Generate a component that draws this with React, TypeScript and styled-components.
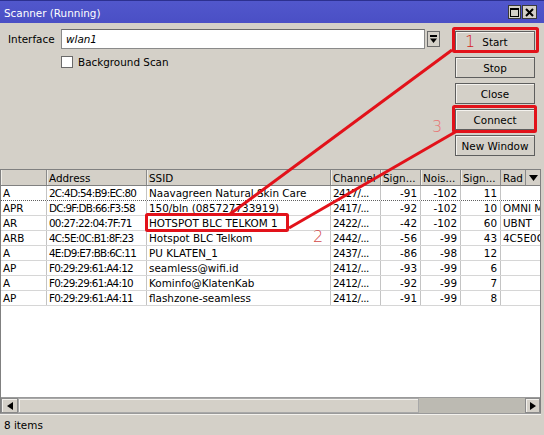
import React from 'react';
import styled, { createGlobalStyle } from 'styled-components';

const Global = createGlobalStyle`
  html, body { margin: 0; padding: 0; background: #d4d0c8; }
  body { font-family: "DejaVu Sans", "Liberation Sans", sans-serif; font-size: 10.4px; color: #000; }
  * { box-sizing: border-box; }
`;

const FONT = `"DejaVu Sans", "Liberation Sans", sans-serif`;

const Window = styled.div`
  position: relative;
  width: 544px;
  height: 435px;
  display: flex;
  flex-direction: column;
  background: #d4d0c8;
  overflow: hidden;
  font-family: ${FONT};
  font-size: 10.4px;
`;

const TitleBar = styled.div`
  height: 23px;
  flex: none;
  display: flex;
  align-items: center;
  padding: 0 7px 0 4px;
  background: linear-gradient(#5157cc, #4a4fc5);
  border-top: 1px solid #2c3090;
  color: #fff;
`;

const Title = styled.div`
  flex: 1;
  padding-top: 1px;
`;

const TitleButtons = styled.div`
  display: flex;
  align-items: center;
  gap: 1px;
`;

const TitleBtn = styled.div<{ $w: number }>`
  width: ${(p) => p.$w}px;
  height: 14px;
  background: #d4d0c8;
  border: 1px solid #3a3a3a;
  display: flex;
  align-items: center;
  justify-content: center;
`;

const Top = styled.div`
  height: 146px;
  flex: none;
  display: flex;
`;

const Form = styled.div`
  flex: 1;
  padding: 6px 15px 0 8px;
  display: flex;
  flex-direction: column;
  gap: 6px;
`;

const FieldRow = styled.div`
  display: flex;
  align-items: center;
  height: 20px;
`;

const Label = styled.div`
  width: 53px;
  flex: none;
`;

const Input = styled.div`
  flex: 1;
  height: 20px;
  background: #fff;
  border: 1px solid #8a8a8a;
  border-top-color: #6a6a6a;
  display: flex;
  align-items: center;
  padding-left: 4px;
  font-style: italic;
`;

const DropBtn = styled.div`
  width: 13px;
  height: 16px;
  margin-left: 2px;
  background: #d4d0c8;
  border: 1px solid #6a6a6a;
  display: flex;
  align-items: center;
  justify-content: center;
`;

const CheckRow = styled.div`
  display: flex;
  align-items: center;
  gap: 5px;
  padding-left: 53px;
  height: 12px;
  margin-top: 1px;
`;

const CheckBox = styled.div`
  width: 12px;
  height: 12px;
  background: #fff;
  border: 1px solid #6a6a6a;
`;

const ButtonCol = styled.div`
  width: 80px;
  flex: none;
  margin-right: 9px;
  padding-top: 8px;
  display: flex;
  flex-direction: column;
  gap: 5px;
`;

const Button = styled.div`
  height: 21px;
  background: #d4d0c8;
  border: 1px solid #5e5e5e;
  box-shadow: inset 1px 1px #f4f2ee;
  display: flex;
  align-items: center;
  justify-content: center;
`;

const TableBox = styled.div`
  flex: none;
  height: 244px;
  width: 541px;
  background: #fff;
  border-left: 1px solid #808080;
  border-right: 1px solid #808080;
  display: flex;
  flex-direction: column;
  overflow: hidden;
`;

const COLS = '46px 100px 184px 50px 40px 40px 40px 39px';

const HeaderRow = styled.div`
  display: grid;
  grid-template-columns: ${COLS};
  height: 17px;
  flex: none;
  background: #d4d0c8;
  border-top: 1px solid #808080;
  border-bottom: 1px solid #808080;
`;

const HeadCell = styled.div`
  border-right: 1px solid #8a8a8a;
  box-shadow: inset 1px 0 #f0eee8;
  padding-left: 2px;
  display: flex;
  align-items: center;
  white-space: nowrap;
  overflow: hidden;
`;

const HeadLast = styled.div`
  display: flex;
`;

const HeadRad = styled.div`
  width: 25px;
  border-right: 1px solid #8a8a8a;
  padding-left: 2px;
  display: flex;
  align-items: center;
  overflow: hidden;
  white-space: nowrap;
`;

const HeadArrow = styled.div`
  flex: 1;
  display: flex;
  align-items: center;
  justify-content: center;
`;

const Body = styled.div`
  flex: 1;
  overflow: hidden;
`;

const Row = styled.div<{ $focus?: boolean }>`
  display: grid;
  grid-template-columns: ${COLS};
  height: 15px;
  border-bottom: 1px ${(p) => (p.$focus ? 'dotted #606060' : 'solid #d6d6d6')};
`;

const Cell = styled.div<{ $right?: boolean; $last?: boolean; $ls?: number }>`
  border-right: ${(p) => (p.$last ? 'none' : '1px solid #c4c4c4')};
  padding: ${(p) => (p.$right ? '0 3px 0 0' : '0 0 0 2px')};
  text-align: ${(p) => (p.$right ? 'right' : 'left')};
  letter-spacing: ${(p) => p.$ls ?? 0}px;
  line-height: 14px;
  white-space: nowrap;
  overflow: hidden;
`;

const ScrollBar = styled.div`
  height: 16px;
  flex: none;
  display: flex;
  background: #bcbab2;
  border-top: 1px solid #9a9a9a;
`;

const ScrollBtn = styled.div<{ $w: number }>`
  width: ${(p) => p.$w}px;
  flex: none;
  background: #d4d0c8;
  border: 1px solid #8a8a8a;
  box-shadow: inset 1px 1px #f4f2ee;
  display: flex;
  align-items: center;
  justify-content: center;
`;

const Thumb = styled.div`
  width: 401px;
  flex: none;
  background: #d4d0c8;
  border: 1px solid #a8a8a8;
  box-shadow: inset 1px 1px #f4f2ee;
`;

const Track = styled.div`
  flex: 1;
`;

const StatusBar = styled.div`
  flex: 1;
  display: flex;
  align-items: center;
  padding-left: 4px;
  border-top: 1px solid #9a9a9a;
  box-shadow: inset 0 1px #f4f2ee;
  margin-right: 3px;
`;

const Overlay = styled.svg`
  position: absolute;
  left: 0;
  top: 0;
  pointer-events: none;
`;

type R = [string, string, string, string, string, string, string, string];

const rows: R[] = [
  ['A', '2C:4D:54:B9:EC:80', 'Naavagreen Natural Skin Care', '2417/...', '-91', '-102', '11', ''],
  ['APR', 'DC:9F:DB:66:F3:58', '150/bln (085727733919)', '2417/...', '-92', '-102', '10', 'OMNI M'],
  ['AR', '00:27:22:04:7F:71', 'HOTSPOT BLC TELKOM 1', '2422/...', '-42', '-102', '60', 'UBNT'],
  ['ARB', '4C:5E:0C:B1:8F:23', 'Hotspot BLC Telkom', '2442/...', '-56', '-99', '43', '4C5E0C'],
  ['A', '4E:D9:E7:BB:6C:11', 'PU KLATEN_1', '2437/...', '-86', '-98', '12', ''],
  ['AP', 'F0:29:29:61:A4:12', 'seamless@wifi.id', '2412/...', '-93', '-99', '6', ''],
  ['A', 'F0:29:29:61:A4:10', 'Kominfo@KlatenKab', '2412/...', '-92', '-99', '7', ''],
  ['AP', 'F0:29:29:61:A4:11', 'flashzone-seamless', '2412/...', '-91', '-99', '8', ''],
];

const RED = '#e2121a';

export default function App() {
  return (
    <>
      <Global />
      <Window>
        <TitleBar>
          <Title>Scanner (Running)</Title>
          <TitleButtons>
            <TitleBtn $w={13}>
              <svg width="9" height="9" viewBox="0 0 9 9">
                <rect x="0.5" y="0.5" width="8" height="8" fill="none" stroke="#000" strokeWidth="1" />
                <rect x="0.5" y="0.5" width="8" height="1.5" fill="#000" />
              </svg>
            </TitleBtn>
            <TitleBtn $w={15}>
              <svg width="9" height="9" viewBox="0 0 9 9">
                <path d="M1 1 L8 8 M8 1 L1 8" stroke="#000" strokeWidth="2" />
              </svg>
            </TitleBtn>
          </TitleButtons>
        </TitleBar>

        <Top>
          <Form>
            <FieldRow>
              <Label>Interface</Label>
              <Input>wlan1</Input>
              <DropBtn>
                <svg width="9" height="9" viewBox="0 0 9 9">
                  <rect x="1" y="0" width="7" height="2" fill="#000" />
                  <path d="M1 3.5 H8 L4.5 8 Z" fill="#000" />
                </svg>
              </DropBtn>
            </FieldRow>
            <CheckRow>
              <CheckBox />
              <span>Background Scan</span>
            </CheckRow>
          </Form>
          <ButtonCol>
            <Button>Start</Button>
            <Button>Stop</Button>
            <Button>Close</Button>
            <Button>Connect</Button>
            <Button>New Window</Button>
          </ButtonCol>
        </Top>

        <TableBox>
          <HeaderRow>
            <HeadCell />
            <HeadCell>Address</HeadCell>
            <HeadCell>SSID</HeadCell>
            <HeadCell>Channel</HeadCell>
            <HeadCell>Sign...</HeadCell>
            <HeadCell>Nois...</HeadCell>
            <HeadCell>Sign...</HeadCell>
            <HeadLast>
              <HeadRad>Rad</HeadRad>
              <HeadArrow>
                <svg width="9" height="6" viewBox="0 0 9 6">
                  <path d="M0 0 H9 L4.5 6 Z" fill="#000" />
                </svg>
              </HeadArrow>
            </HeadLast>
          </HeaderRow>
          <Body>
            {rows.map((r, i) => (
              <Row key={i} $focus={i === 0}>
                <Cell>{r[0]}</Cell>
                <Cell $ls={-0.75}>{r[1]}</Cell>
                <Cell>{r[2]}</Cell>
                <Cell $ls={-0.5}>{r[3]}</Cell>
                <Cell $right>{r[4]}</Cell>
                <Cell $right>{r[5]}</Cell>
                <Cell $right>{r[6]}</Cell>
                <Cell $last>{r[7]}</Cell>
              </Row>
            ))}
          </Body>
          <ScrollBar>
            <ScrollBtn $w={17}>
              <svg width="6" height="8" viewBox="0 0 6 8">
                <path d="M6 0 V8 L0 4 Z" fill="#000" />
              </svg>
            </ScrollBtn>
            <Thumb />
            <Track />
            <ScrollBtn $w={15}>
              <svg width="6" height="8" viewBox="0 0 6 8">
                <path d="M0 0 V8 L6 4 Z" fill="#000" />
              </svg>
            </ScrollBtn>
          </ScrollBar>
        </TableBox>

        <StatusBar>8 items</StatusBar>

        <Overlay width="544" height="435" viewBox="0 0 544 435">
          <line x1="452" y1="50" x2="230" y2="214" stroke={RED} strokeWidth="3" />
          <line x1="457" y1="131" x2="289" y2="228" stroke={RED} strokeWidth="3" />
          <rect x="453.5" y="28.5" width="84" height="23" fill="none" stroke={RED} strokeWidth="3" rx="1" />
          <rect x="453.5" y="106.5" width="82" height="25" fill="none" stroke={RED} strokeWidth="3" rx="1" />
          <rect x="146.5" y="214.5" width="141" height="16" fill="none" stroke={RED} strokeWidth="3" rx="1" />
          <text x="465" y="47" fontFamily={FONT} fontSize="16" fontWeight="200" fill="#d42020">1</text>
          <text x="432" y="132" fontFamily={FONT} fontSize="16" fontWeight="200" fill="#e87474">3</text>
          <text x="313" y="242" fontFamily={FONT} fontSize="16" fontWeight="200" fill="#d24848">2</text>
        </Overlay>
      </Window>
    </>
  );
}
